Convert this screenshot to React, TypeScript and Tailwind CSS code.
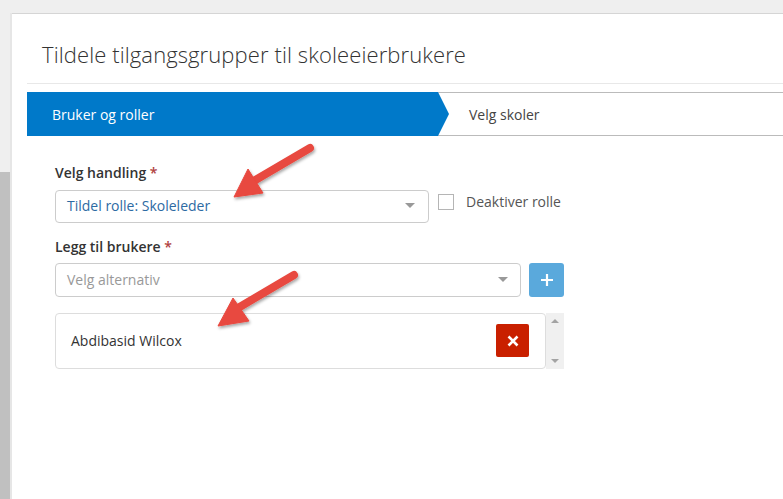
const Caret = () => (
  <span className="block w-0 h-0 border-x-[5px] border-x-transparent border-t-[5px] border-t-[#999]" />
);

const Arrows = () => (
  <svg className="absolute inset-0 pointer-events-none" width="783" height="499" viewBox="0 0 783 499">
    <defs>
      <filter id="sh" x="-20%" y="-20%" width="140%" height="140%">
        <feDropShadow dx="1" dy="2" stdDeviation="1.6" floodColor="#000" floodOpacity="0.35" />
      </filter>
    </defs>
    <g filter="url(#sh)" fill="#e8483f" stroke="#e8483f">
      <line x1="310" y1="148" x2="252" y2="182" strokeWidth="8" strokeLinecap="round" />
      <polygon points="234,197 248,169 263,193" strokeWidth="1" strokeLinejoin="round" />
      <line x1="294" y1="275" x2="238" y2="308" strokeWidth="8" strokeLinecap="round" />
      <polygon points="218,326 233,298 249,321" strokeWidth="1" strokeLinejoin="round" />
    </g>
  </svg>
);

export default function App() {
  return (
    <div
      className="relative w-[783px] h-[499px] overflow-hidden bg-[#efefef] flex text-[14px] text-[#333]"
      style={{ fontFamily: '"Open Sans", "Liberation Sans", sans-serif' }}
    >
      {/* left rail */}
      <div className="w-[10px] flex flex-col shrink-0">
        <div className="h-[172px] bg-[#efefef]" />
        <div className="flex-1 bg-[#c0c0c0]" />
      </div>
      <div className="w-[2px] bg-[#e6e6e6] mt-[13px] shrink-0" />

      <div className="flex-1 mt-[13px] bg-white border-t border-[#d5d5d5] pl-[15px]">
        <div className="pl-[15px] pt-[26px] pb-[14px] border-b border-[#e8e8e8]">
          <h1 className="text-[22px] leading-[29px] font-light text-[#333] tracking-[0.1px]">
            Tildele tilgangsgrupper til skoleeierbrukere
          </h1>
        </div>

        {/* wizard steps */}
        <div className="mt-[8px] h-[44px] flex items-center border-y border-[#bbb]">
          <div className="w-[422px] h-[44px] -my-px bg-[#0079c9] text-white flex items-center pl-[25px] [clip-path:polygon(0_0,411px_0,422px_50%,411px_100%,0_100%)]">
            Bruker og roller
          </div>
          <div className="ml-[20px] text-[#444]">Velg skoler</div>
        </div>

        <div className="pl-[28px] pt-[27px]">
          <label className="block font-semibold leading-[20px]">
            Velg handling <span className="text-[#b0413e]">*</span>
          </label>
          <div className="mt-[7px] flex items-start">
            <div className="w-[374px] h-[33px] border border-[#ccc] rounded-[4px] flex items-center justify-between pl-[11px] pr-[13px] pb-[2px]">
              <span className="text-[#2d6aa3]">Tildel rolle: Skoleleder</span>
              <Caret />
            </div>
            <span className="mt-[4px] ml-[9px] w-[16px] h-[16px] border border-[#b5b5b5] bg-white" />
            <span className="mt-[2px] ml-[12px] leading-[20px] text-[#555]">Deaktiver rolle</span>
          </div>

          <label className="block mt-[14px] font-semibold leading-[20px]">
            Legg til brukere <span className="text-[#b0413e]">*</span>
          </label>
          <div className="mt-[6px] flex">
            <div className="w-[466px] h-[34px] border border-[#ccc] rounded-[4px] flex items-center justify-between pl-[11px] pr-[12px] pb-[1px]">
              <span className="text-[#999]">Velg alternativ</span>
              <Caret />
            </div>
            <button className="ml-[8px] w-[35px] h-[34px] bg-[#5aa9dc] rounded-[3px] flex items-center justify-center">
              <svg width="14" height="14" viewBox="0 0 14 14">
                <path d="M7 1v12M1 7h12" stroke="#fff" strokeWidth="2.2" />
              </svg>
            </button>
          </div>

          <div className="mt-[16px] flex">
            <div className="w-[491px] h-[56px] border border-[#ddd] rounded-[4px] flex items-center justify-between pl-[15px] pr-[16px] pb-[1px]">
              <span>Abdibasid Wilcox</span>
              <button className="w-[33px] h-[33px] bg-[#c92000] rounded-[2px] flex items-center justify-center">
                <svg width="12" height="12" viewBox="0 0 12 12">
                  <path d="M1.5 1.5l9 9M10.5 1.5l-9 9" stroke="#fff" strokeWidth="2.6" />
                </svg>
              </button>
            </div>
            <div className="w-[18px] h-[56px] bg-[#f0f0f0] flex flex-col items-center justify-between py-[6px]">
              <span className="block w-0 h-0 border-x-[4px] border-x-transparent border-b-[4px] border-b-[#a3a3a3]" />
              <span className="block w-0 h-0 border-x-[4px] border-x-transparent border-t-[4px] border-t-[#a3a3a3]" />
            </div>
          </div>
        </div>
      </div>

      <Arrows />
    </div>
  );
}
